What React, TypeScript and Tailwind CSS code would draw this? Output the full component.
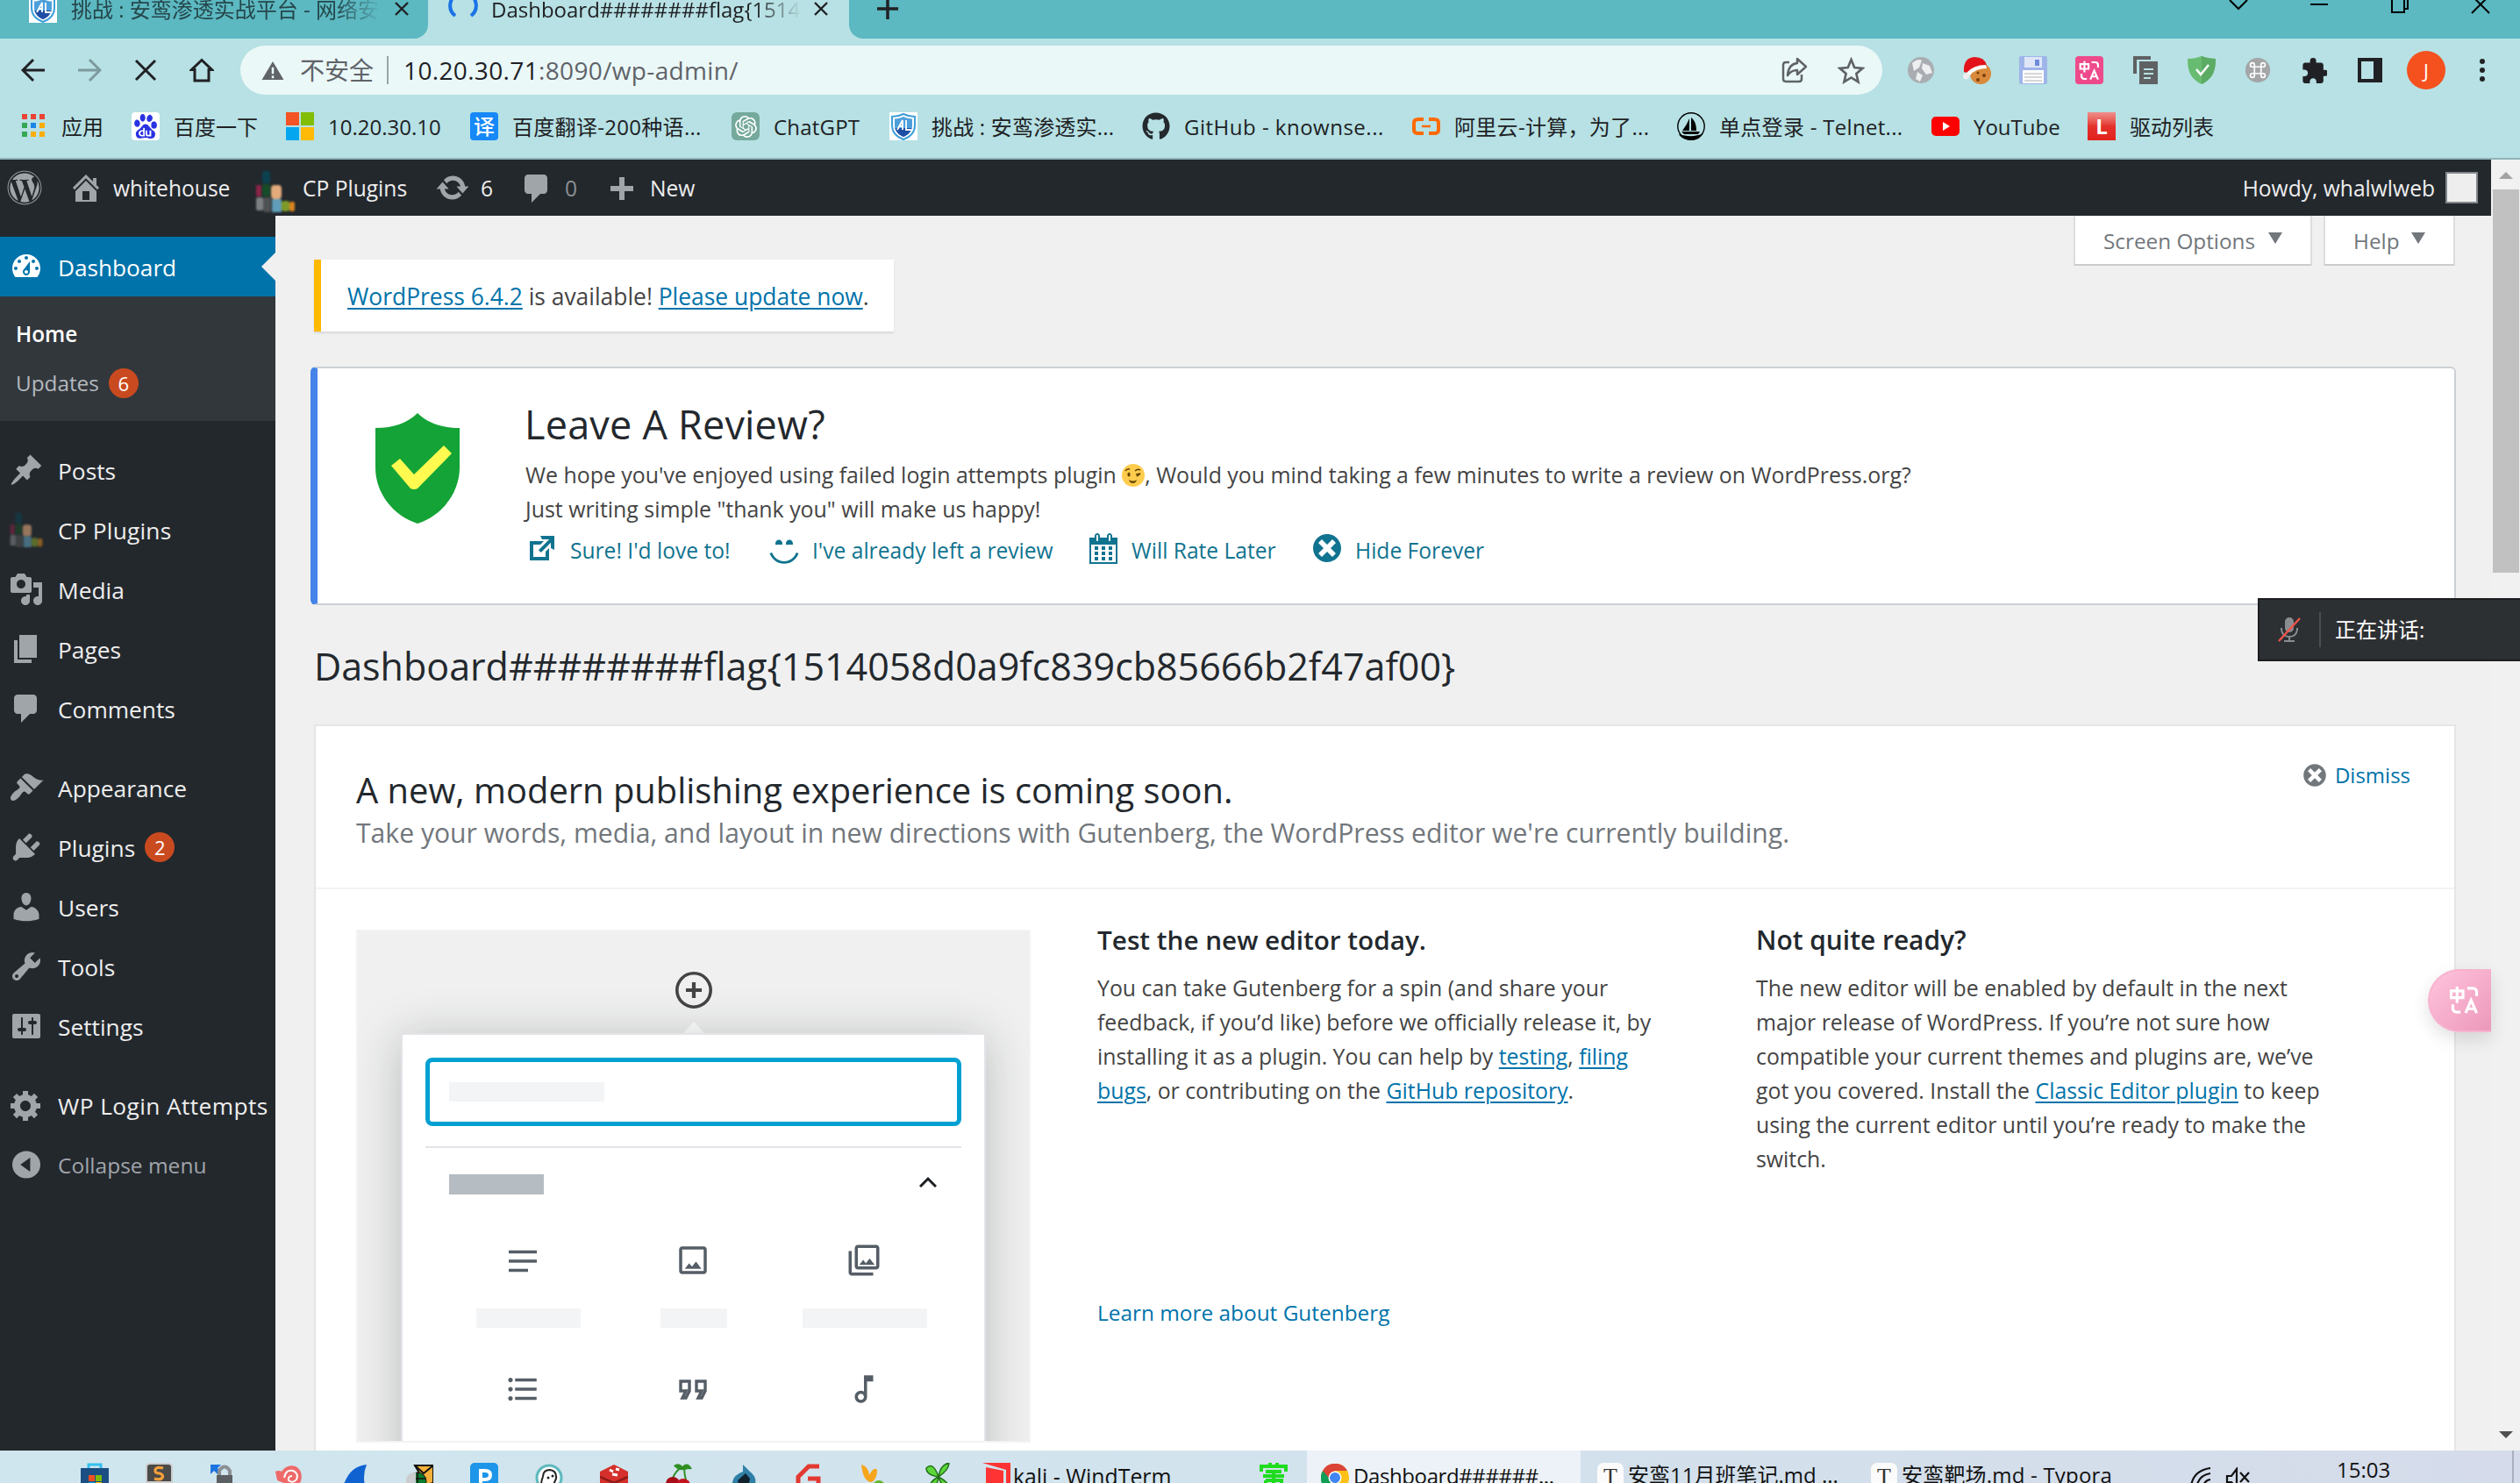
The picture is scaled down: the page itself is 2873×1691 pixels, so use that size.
import React from "react";
import { FaGithub, FaWordpress } from "react-icons/fa";
import { SiBaidu, SiOpenai } from "react-icons/si";

const dash = {
  dashboard:
    "M3.76 16h12.48c1.1-1.37 1.76-3.11 1.76-5 0-4.42-3.58-8-8-8s-8 3.58-8 8c0 1.89.66 3.63 1.76 5zM10 4c.55 0 1 .45 1 1s-.45 1-1 1-1-.45-1-1 .45-1 1-1zM6 6c.55 0 1 .45 1 1s-.45 1-1 1-1-.45-1-1 .45-1 1-1zm8 0c.55 0 1 .45 1 1s-.45 1-1 1-1-.45-1-1 .45-1 1-1zm-5.37 5.55L12 7v6c0 1.1-.9 2-2 2s-2-.9-2-2c0-.57.24-1.08.63-1.45zM4 10c.55 0 1 .45 1 1s-.45 1-1 1-1-.45-1-1 .45-1 1-1zm12 0c.55 0 1 .45 1 1s-.45 1-1 1-1-.45-1-1 .45-1 1-1zm-5 3c0-.55-.45-1-1-1s-1 .45-1 1 .45 1 1 1 1-.45 1-1z",
  post: "M10.44 3.02l1.82-1.82 6.36 6.35-1.83 1.82c-1.05-.68-2.48-.57-3.41.36l-.75.75c-.92.93-1.04 2.35-.35 3.41l-1.83 1.82-2.41-2.41-2.8 2.79c-.42.42-3.38 2.71-3.8 2.29s1.86-3.39 2.28-3.81l2.79-2.79L4.1 9.36l1.83-1.82c1.05.69 2.48.57 3.4-.36l.75-.75c.93-.92 1.05-2.35.36-3.41z",
  comment: "M5 2h9c1.1 0 2 .9 2 2v7c0 1.1-.9 2-2 2h-2l-5 5v-5H5c-1.1 0-2-.9-2-2V4c0-1.1.9-2 2-2z",
  media:
    "M13 11V4c0-.55-.45-1-1-1h-1.67L9 1H5L3.67 3H2c-.55 0-1 .45-1 1v7c0 .55.45 1 1 1h10c.55 0 1-.45 1-1zM7 4.5c1.38 0 2.5 1.12 2.5 2.5S8.38 9.5 7 9.5 4.5 8.38 4.5 7 5.62 4.5 7 4.5zM14 6h5v10.5c0 1.38-1.12 2.5-2.5 2.5S14 17.88 14 16.5s1.12-2.5 2.5-2.5c.17 0 .34.02.5.05V9h-3V6zm-4 8.05V13h2v3.5c0 1.38-1.12 2.5-2.5 2.5S7 17.88 7 16.5 8.12 14 9.5 14c.17 0 .34.02.5.05z",
  page: "M6 15V2h10v13H6zm-1 1h8v2H3V5h2v11z",
  appearance:
    "M14.48 11.06L7.41 3.99l1.5-1.5c.5-.56 2.3-.47 3.51.32 1.21.8 1.43 1.28 2.91 2.1 1.18.64 2.45 1.26 4.45.85zm-.71.71L6.7 4.7 4.93 6.47c-.39.39-.39 1.02 0 1.41l1.06 1.06c.39.39.39 1.03 0 1.42-.6.6-1.43 1.11-2.21 1.69-.35.26-.7.53-1.01.84C1.43 14.23.4 16.08 1.4 17.07c.99 1 2.84-.03 4.18-1.36.31-.31.58-.66.85-1.02.57-.78 1.08-1.61 1.69-2.21.39-.39 1.02-.39 1.41 0l1.06 1.06c.39.39 1.02.39 1.41 0z",
  plugins:
    "M13.11 4.36L9.87 7.6 8 5.73l3.24-3.24c.35-.34 1.05-.2 1.56.32.52.51.66 1.21.31 1.55zm-8 1.77l.91-1.12 9.01 9.01-1.19.84c-.71.71-2.63 1.16-3.82 1.16H6.14L4.9 17.26c-.59.59-1.54.59-2.12 0-.59-.58-.59-1.53 0-2.12l1.24-1.24v-3.88c0-1.13.4-3.19 1.09-3.89zm7.26 3.97l3.24-3.24c.34-.35 1.04-.21 1.55.31.52.51.66 1.21.31 1.55l-3.24 3.25z",
  users:
    "M10 9.25c-2.27 0-2.73-3.44-2.73-3.44C7 4.02 7.82 2 9.97 2c2.16 0 2.98 2.02 2.71 3.81 0 0-.41 3.44-2.68 3.44zm0 2.57L12.72 10c2.39 0 4.52 2.33 4.52 4.53v2.49s-3.65 1.13-7.24 1.13c-3.65 0-7.24-1.13-7.24-1.13v-2.49c0-2.25 1.94-4.48 4.47-4.48z",
  tools:
    "M16.68 9.77c-1.34 1.34-3.3 1.67-4.95.99l-5.41 6.52c-.99.99-2.59.99-3.58 0s-.99-2.59 0-3.57l6.52-5.42c-.68-1.65-.35-3.61.99-4.95 1.28-1.28 3.12-1.62 4.72-1.06l-2.89 2.89 2.82 2.82 2.86-2.87c.53 1.58.18 3.39-1.08 4.65zM3.81 16.21c.4.39 1.04.39 1.43 0 .4-.4.4-1.04 0-1.43-.39-.4-1.03-.4-1.43 0-.39.39-.39 1.03 0 1.43z",
  settings:
    "M18 16V4c0-.55-.45-1-1-1H3c-.55 0-1 .45-1 1v12c0 .55.45 1 1 1h14c.55 0 1-.45 1-1zM8 11h1c.55 0 1 .45 1 1s-.45 1-1 1H8v1.5c0 .28-.22.5-.5.5s-.5-.22-.5-.5V13H6c-.55 0-1-.45-1-1s.45-1 1-1h1V5.5c0-.28.22-.5.5-.5s.5.22.5.5V11zm5-2h-1c-.55 0-1-.45-1-1s.45-1 1-1h1V5.5c0-.28.22-.5.5-.5s.5.22.5.5V7h1c.55 0 1 .45 1 1s-.45 1-1 1h-1v5.5c0 .28-.22.5-.5.5s-.5-.22-.5-.5V9z",
  generic:
    "M18 12h-2.18c-.17.7-.44 1.35-.81 1.93l1.54 1.54-2.1 2.1-1.54-1.54c-.58.36-1.23.63-1.91.79V19H8v-2.18c-.68-.16-1.33-.43-1.91-.79l-1.54 1.54-2.12-2.12 1.54-1.54c-.36-.58-.63-1.23-.79-1.91H1V9.03h2.17c.16-.7.44-1.35.8-1.94L2.43 5.55l2.1-2.1 1.54 1.54c.58-.37 1.24-.64 1.93-.81V2h3v2.18c.68.16 1.33.43 1.91.79l1.54-1.54 2.12 2.12-1.54 1.54c.36.59.64 1.24.8 1.94H18V12zm-8.5 1.5c1.66 0 3-1.34 3-3s-1.34-3-3-3-3 1.34-3 3 1.34 3 3 3z",
  collapse: "M10 2.2a8 7.8 0 1 0 0 15.6 8 7.8 0 1 0 0-15.6zM12.2 6v8L6.6 10z",
  home: "M16 8.5l1.53 1.53-1.06 1.06L10 4.6l-6.47 6.49-1.06-1.06L10 2.5l4 4v-2h2v4zm-6-2.46l6 5.99V18H4v-5.97zM12 17v-5H8v5h4z",
  update:
    "M10.2 3.28c3.53 0 6.43 2.61 6.92 6h2.08l-3.5 4-3.5-4h2.32c-.45-1.97-2.21-3.45-4.32-3.45-1.45 0-2.73.71-3.54 1.78L4.95 5.66C6.23 4.2 8.11 3.28 10.2 3.28zm-.4 13.44c-3.52 0-6.43-2.61-6.92-6H.8l3.5-4c1.17 1.33 2.33 2.67 3.5 4H5.48c.45 1.97 2.21 3.45 4.32 3.45 1.45 0 2.73-.71 3.54-1.78l1.71 1.95c-1.28 1.46-3.15 2.38-5.25 2.38z",
  plus: "M17 9v3h-5v5H9v-5H4V9h5V4h3v5h5z",
  dismiss:
    "M10 2c4.42 0 8 3.58 8 8s-3.58 8-8 8-8-3.58-8-8 3.58-8 8-8zm5 11l-3-3 3-3-2-2-3 3-3-3-2 2 3 3-3 3 2 2 3-3 3 3z",
  external: "M9 3h8v8l-2-1V6.92l-5.6 5.59-1.41-1.41L14.08 5H10zm3 12v-3l2-2v7H3V6h8L9 8H5v7h7z",
  smiley:
    "M7 5.2c1.1 0 2 .89 2 2 0 .37-.11.71-.28 1C8.72 8.2 8 8 7 8s-1.72.2-1.72.2c-.17-.29-.28-.63-.28-1 0-1.11.9-2 2-2zm6 0c1.11 0 2 .89 2 2 0 .37-.11.71-.28 1 0 0-.72-.2-1.72-.2s-1.72.2-1.72.2c-.17-.29-.28-.63-.28-1 0-1.11.89-2 2-2zm-3 13.7c3.72 0 7.03-2.36 8.23-5.88l-1.32-.46C15.9 15.52 13.12 17.5 10 17.5s-5.9-1.98-6.91-4.94l-1.32.46c1.2 3.52 4.51 5.88 8.23 5.88z",
  calendar:
    "M15 4h3v15H2V4h3V3c0-.41.15-.76.44-1.06.29-.29.65-.44 1.06-.44s.77.15 1.06.44c.29.3.44.65.44 1.06v1h4V3c0-.41.15-.76.44-1.06.29-.29.65-.44 1.06-.44s.77.15 1.06.44c.29.3.44.65.44 1.06v1zM6 3v2.5c0 .14.05.26.15.36.09.09.21.14.35.14s.26-.05.35-.14c.1-.1.15-.22.15-.36V3c0-.14-.05-.26-.15-.35-.09-.1-.21-.15-.35-.15s-.26.05-.35.15c-.1.09-.15.21-.15.35zm7 0v2.5c0 .14.05.26.14.36.1.09.22.14.36.14s.26-.05.36-.14c.09-.1.14-.22.14-.36V3c0-.14-.05-.26-.14-.35-.1-.1-.22-.15-.36-.15s-.26.05-.36.15c-.09.09-.14.21-.14.35zm4 15V8H3v10h14zM7 9v2H5V9h2zm2 0h2v2H9V9zm4 2V9h2v2h-2zm-6 1v2H5v-2h2zm2 0h2v2H9v-2zm4 2v-2h2v2h-2zm-6 1v2H5v-2h2zm4 2H9v-2h2v2zm4 0h-2v-2h2v2z",
};

function Dash({ name, className = "" }: { name: keyof typeof dash; className?: string }) {
  return (
    <svg viewBox="0 0 20 20" fill="currentColor" fillRule="evenodd" className={"block shrink-0 " + className}>
      <path d={dash[name]} />
    </svg>
  );
}

function CpLogo({ className = "" }: { className?: string }) {
  return (
    <svg viewBox="0 0 44 48" className={"block shrink-0 blur-[0.8px] " + className}>
      <rect x="7" y="1" width="9" height="14" rx="2" fill="#0c4250" />
      <rect x="0" y="17" width="6" height="13" rx="1" fill="#8a2446" />
      <rect x="7" y="16" width="9" height="14" rx="2" fill="#174c29" />
      <rect x="17" y="17" width="12" height="16" rx="4" fill="#e3ab7c" />
      <rect x="0" y="31" width="8" height="15" rx="2" fill="#7d8082" />
      <rect x="8" y="31" width="9" height="17" rx="2" fill="#4f5254" />
      <rect x="18" y="33" width="11" height="15" rx="1" fill="#5f9db8" />
      <rect x="29" y="35" width="9" height="12" rx="3" fill="#7f9a28" />
      <rect x="38" y="36" width="6" height="11" rx="2" fill="#d88420" />
    </svg>
  );
}

/* ---------- favicons ---------- */

function AlLogo() {
  return (
    <svg viewBox="0 0 32 32" className="block h-8 w-8 shrink-0">
      <rect width="32" height="32" fill="#fff" />
      <path d="M16 2c4 2 8 3 13 3v10c0 8-5 13-13 16C8 28 3 23 3 15V5c5 0 9-1 13-3z" fill="#fff" stroke="#3f9fd8" strokeWidth="2" />
      <path d="M16 5c3 1.500 6 2.500 10 2.500V15c0 6-4 10-10 13C10 25 6 21 6 15V7.500C10 7.500 13 6.500 16 5z" fill="#4d9fdc" />
      <path d="M6.500 18h19c-1 4.500-4.500 8-9.500 10-5-2-8.500-5.500-9.500-10z" fill="#1f4fa5" />
      <path d="M9 20l6-11v11M12 16h4M19 9v11h6" fill="none" stroke="#fff" strokeWidth="1.800" />
    </svg>
  );
}
const AppsIcon = () => (
  <svg viewBox="0 0 32 32" className="block h-8 w-8 shrink-0">
    {["#ea4335", "#ea4335", "#ea4335", "#34a853", "#1a86e8", "#fbac08", "#34a853", "#fbac08", "#fbac08"].map((c, i) => (
      <rect key={i} x={3 + (i % 3) * 10} y={2 + Math.floor(i / 3) * 10} width="6" height="6" fill={c} />
    ))}
  </svg>
);
const BaiduIcon = () => (
  <span className="flex h-8 w-8 shrink-0 items-center justify-center rounded bg-white text-[28px] text-[#2932e1]">
    <SiBaidu />
  </span>
);
const MsIcon = () => (
  <svg viewBox="0 0 32 32" className="block h-8 w-8 shrink-0">
    <path d="M0 0h15v15H0z" fill="#f35325" />
    <path d="M17 0h15v15H17z" fill="#81bc06" />
    <path d="M0 17h15v15H0z" fill="#05a6f0" />
    <path d="M17 17h15v15H17z" fill="#ffba08" />
  </svg>
);
const YiIcon = () => (
  <span className="flex h-8 w-8 shrink-0 items-center justify-center rounded bg-[#1688f8] text-[24px] leading-8 font-medium text-white">译</span>
);
const GptIcon = () => (
  <span className="flex h-8 w-8 shrink-0 items-center justify-center rounded-md bg-[#75a99c] text-[25px] text-white">
    <SiOpenai />
  </span>
);
const GithubIcon = () => <FaGithub className="block h-8 w-8 shrink-0 text-[#24292e]" />;
const AliIcon = () => (
  <svg viewBox="0 0 32 32" className="block h-8 w-8 shrink-0" fill="none" stroke="#ff6a00" strokeWidth="4">
    <path d="M13 8H7Q2 8 2 12v8q0 4 5 4h6M19 8h6q5 0 5 4v8q0 4-5 4h-6" />
    <path d="M11 16h10" strokeWidth="2.500" />
  </svg>
);
const BoatIcon = () => (
  <svg viewBox="0 0 32 32" className="block h-8 w-8 shrink-0">
    <circle cx="16" cy="16" r="15.200" fill="none" stroke="#000" strokeWidth="1.400" />
    <path d="M16 6c4 3 6 8 6 15h-6zM14 7v14H6c3-4 6-9 8-14zM5 22h21l-2 3H8zM2 25c9 3 20 3 28-1-3 5-8 8-14 8S4 29 2 25z" />
  </svg>
);
const YtIcon = () => (
  <svg viewBox="0 0 32 32" className="block h-8 w-8 shrink-0">
    <rect y="5" width="32" height="22" rx="5" fill="#f00" />
    <path d="M13 11l8 5-8 5z" fill="#fff" />
  </svg>
);
const LIcon = () => (
  <span className="flex h-8 w-8 shrink-0 items-center justify-center bg-linear-to-b from-[#ee8d8b] via-[#e4302c] to-[#e2211c] text-[24px] leading-8 font-bold text-white">
    L
  </span>
);

const bookmarks: { w: string; label: string; icon: React.ReactNode; t: string }[] = [
  { w: "w-[128px]", label: "应用", icon: <AppsIcon />, t: "" },
  { w: "w-[176px]", label: "百度一下", icon: <BaiduIcon />, t: "" },
  { w: "w-[210px]", label: "10.20.30.10", icon: <MsIcon />, t: "" },
  { w: "w-[298px]", label: "百度翻译-200种语...", icon: <YiIcon />, t: "tracking-[0.3px]" },
  { w: "w-[180px]", label: "ChatGPT", icon: <GptIcon />, t: "tracking-[0.2px]" },
  { w: "w-[288px]", label: "挑战 : 安鸾渗透实...", icon: <AlLogo />, t: "tracking-[0.2px]" },
  { w: "w-[308px]", label: "GitHub - knownse...", icon: <GithubIcon />, t: "tracking-[0.5px]" },
  { w: "w-[302px]", label: "阿里云-计算，为了...", icon: <AliIcon />, t: "tracking-[0.3px]" },
  { w: "w-[290px]", label: "单点登录 - Telnet...", icon: <BoatIcon />, t: "tracking-[0.3px]" },
  { w: "w-[178px]", label: "YouTube", icon: <YtIcon />, t: "" },
  { w: "w-[150px]", label: "驱动列表", icon: <LIcon />, t: "" },
];

/* ---------- browser chrome ---------- */

const Cross = ({ className = "" }: { className?: string }) => (
  <svg viewBox="0 0 16 16" fill="none" stroke="#202124" strokeWidth="2.400" className={"block shrink-0 " + className}>
    <path d="M1 1l14 14M15 1L1 15" />
  </svg>
);

function TabStrip() {
  return (
    <div className="flex h-[44px] shrink-0 overflow-hidden text-[24px] leading-[32px] text-[#202124]">
      <div className="flex h-[44px] w-[488px] shrink-0 items-start rounded-br-[16px] bg-[#5cb8c1]">
        <div className="-mt-[6px] ml-[33px]">
          <AlLogo />
        </div>
        <div className="-mt-[5px] ml-[16px] w-[353px] overflow-hidden whitespace-nowrap text-[#24464a] [mask-image:linear-gradient(to_right,#000_85%,transparent)]">
          挑战 : 安鸾渗透实战平台 - 网络安全
        </div>
        <Cross className="mt-[2px] ml-[16px] h-4 w-4" />
      </div>
      <div className="flex h-[44px] w-[480px] shrink-0 items-start">
        <svg viewBox="0 0 34 34" className="-mt-[11px] ml-[23px] block h-[34px] w-[34px]" fill="none" stroke="#1a73e8" strokeWidth="4">
          <path d="M10 4.500A14.500 14.500 0 0 0 8 29M24 4.500A14.500 14.500 0 0 1 26 29" />
        </svg>
        <div className="-mt-[5px] ml-[15px] w-[353px] overflow-hidden whitespace-nowrap [mask-image:linear-gradient(to_right,#000_85%,transparent)]">
          Dashboard########flag{"{"}1514058
        </div>
        <Cross className="mt-[2px] ml-[15px] h-4 w-4" />
      </div>
      <div className="flex h-[44px] grow items-start rounded-bl-[16px] bg-[#5cb8c1]">
        <svg viewBox="0 0 24 24" className="-mt-[2px] ml-[32px] block h-6 w-6" stroke="#202124" strokeWidth="3.500">
          <path d="M12 0v24M0 12h24" />
        </svg>
        <div className="ml-auto flex pr-0 text-black">
          <svg viewBox="0 0 92 22" className="h-[22px] w-[92px]" fill="none" stroke="#000" strokeWidth="2">
            <path d="M37 0l10 10 10-10" />
          </svg>
          <svg viewBox="0 0 92 22" className="h-[22px] w-[92px]" fill="none" stroke="#000" strokeWidth="2">
            <path d="M37 5h20" />
          </svg>
          <svg viewBox="0 0 92 22" className="h-[22px] w-[92px]" fill="none" stroke="#000" strokeWidth="2">
            <path d="M38-1h14v15H38zM56 0v10h-4" />
          </svg>
          <svg viewBox="0 0 92 22" className="h-[22px] w-[92px]" fill="none" stroke="#000" strokeWidth="2">
            <path d="M37-5l20 20M57-5L37 15" />
          </svg>
        </div>
      </div>
    </div>
  );
}

const Cell = ({ children }: { children: React.ReactNode }) => (
  <div className="flex h-full w-[64px] shrink-0 items-center justify-center">{children}</div>
);

function TranslateGlyph({ className = "" }: { className?: string }) {
  return (
    <svg viewBox="0 0 36 34" fill="none" stroke="currentColor" strokeWidth="3.200" className={"block " + className}>
      <path d="M2 6h14v8H2zM9 1v19M21 3h6q5 0 5 5v4M4 22v4q0 5 5 5h4" />
      <path d="M19 32l6.500-15L32 32M21 27h10" />
    </svg>
  );
}

function Toolbar() {
  return (
    <div className="flex h-[72px] shrink-0 items-center">
      <div className="flex items-center gap-[36px] pl-[24px]">
        <svg viewBox="0 0 28 28" className="h-7 w-7" fill="none" stroke="#202124" strokeWidth="3">
          <path d="M27 14H3M14 2L2 14l12 12" />
        </svg>
        <svg viewBox="0 0 28 28" className="h-7 w-7" fill="none" stroke="#7c9a9d" strokeWidth="3">
          <path d="M1 14h24M14 2l12 12-12 12" />
        </svg>
        <svg viewBox="0 0 28 28" className="h-7 w-7" fill="none" stroke="#202124" strokeWidth="3">
          <path d="M3 3l22 22M25 3L3 25" />
        </svg>
        <svg viewBox="0 0 28 28" className="h-7 w-7" fill="none" stroke="#202124" strokeWidth="3">
          <path d="M14 2.500L2.500 13.500H6V26h16V13.500h3.500z" />
        </svg>
      </div>
      <div className="ml-[30px] flex h-[56px] w-[1872px] shrink-0 items-center rounded-full bg-[#ebf8f8] text-[28px] leading-[40px] text-[#5f6368]">
        <svg viewBox="0 0 26 24" className="ml-[24px] h-[23px] w-[26px]">
          <path d="M13 1l13 22H0z" fill="#5f6368" />
          <path d="M13 8v8M13 18v3" stroke="#ebf8f8" strokeWidth="2.600" />
        </svg>
        <span className="ml-[18px]">不安全</span>
        <div className="ml-[15px] h-8 w-[2px] bg-[#9aa5a7]" />
        <span className="ml-[17px] text-[28px] tracking-[0.35px]">
          <span className="text-[#202124]">10.20.30.71</span>:8090/wp-admin/
        </span>
        <svg viewBox="0 0 30 30" className="mr-[34px] ml-auto h-[30px] w-[30px]" fill="none" stroke="#5f6368" strokeWidth="2.500">
          <path d="M9 6H5Q2 6 2 9v16q0 3 3 3h15q3 0 3-3v-5" />
          <path d="M18 2l10 9-10 9v-5q-7 0-11 6 1-13 11-14z" strokeLinejoin="round" />
        </svg>
        <svg viewBox="0 0 30 30" className="mr-[20px] h-[31px] w-[31px]" fill="none" stroke="#5f6368" strokeWidth="2.600">
          <path d="M15 3l3.600 8.600 9 .8-6.900 6 2.100 9.100L15 22.700l-7.800 4.800 2.100-9.100-6.900-6 9-.8z" />
        </svg>
      </div>
      <div className="ml-[12px] flex h-full">
        <Cell>
          <svg viewBox="0 0 32 32" className="h-8 w-8">
            <circle cx="16" cy="16" r="15" fill="#a9adb1" />
            <path d="M6 8q7-6 11-3l-3 8-6 4zM18 8l8 3 3 8-7 2-5-7zM12 18l6 4-3 7-5-3z" fill="#eceef0" />
          </svg>
        </Cell>
        <Cell>
          <svg viewBox="0 0 32 32" className="h-8 w-8">
            <circle cx="20" cy="20" r="12" fill="#d98a3a" />
            <circle cx="24" cy="22" r="2" fill="#7b3f10" />
            <circle cx="17" cy="27" r="2" fill="#7b3f10" />
            <circle cx="17" cy="19" r="1.500" fill="#7b3f10" />
            <path d="M1 18Q0 2 13 1q12 0 14 10L5 19z" fill="#e3121a" />
            <path d="M4 19q8-9 22-9l1 4Q14 14 8 22z" fill="#fff" />
            <circle cx="3.500" cy="23" r="3.500" fill="#eee" />
          </svg>
        </Cell>
        <Cell>
          <svg viewBox="0 0 32 32" className="h-8 w-8">
            <rect width="32" height="32" rx="2" fill="#9fb5ea" />
            <rect x="6" y="1" width="20" height="12" fill="#dfe6f8" />
            <rect x="18" y="4" width="5" height="7" fill="#6d8bd8" />
            <rect x="4" y="16" width="24" height="15" fill="#fff" />
            <path d="M6 20h20M6 24h20M6 28h20" stroke="#c9c9c9" strokeWidth="1.500" />
          </svg>
        </Cell>
        <Cell>
          <div className="flex h-8 w-8 items-center justify-center rounded bg-[#ee4a8b] text-white">
            <TranslateGlyph className="h-[23px] w-[25px]" />
          </div>
        </Cell>
        <Cell>
          <svg viewBox="0 0 32 32" className="h-8 w-8" fill="#5f6163">
            <path d="M2 0h20v4H6v16H2z" />
            <path d="M9 6h21v26H9z" />
            <path d="M14 15h11M14 20h11M14 25h8" stroke="#b7e1e4" strokeWidth="2" />
          </svg>
        </Cell>
        <Cell>
          <svg viewBox="0 0 32 32" className="h-8 w-8">
            <path d="M16 0c5 2 10 3 16 3 0 15-4 23-16 29C4 26 0 18 0 3c6 0 11-1 16-3z" fill="#68bc71" />
            <path d="M16 0c5 2 10 3 16 3 0 15-4 23-16 29z" fill="#5bab64" />
            <path d="M10 15l5 6 9-11" fill="none" stroke="#fff" strokeWidth="2.600" />
          </svg>
        </Cell>
        <Cell>
          <svg viewBox="0 0 32 32" className="h-[30px] w-[30px]">
            <circle cx="16" cy="16" r="15" fill="#a3a5a6" />
            <path
              d="M12 12h8v8h-8zM12 12H9.500A2.500 2.500 0 1 1 12 9.500zM20 12V9.500a2.500 2.500 0 1 1 2.500 2.500zM20 20h2.500a2.500 2.500 0 1 1-2.500 2.500zM12 20v2.500A2.500 2.500 0 1 1 9.500 20z"
              fill="none"
              stroke="#fff"
              strokeWidth="1.800"
            />
          </svg>
        </Cell>
        <Cell>
          <svg viewBox="1 1 21 21" className="h-[29px] w-[29px]" fill="#202124">
            <path d="M20.500 11H19V7c0-1.100-.9-2-2-2h-4V3.500a2.500 2.500 0 0 0-5 0V5H4c-1.100 0-1.990.9-1.990 2v3.800H3.500c1.490 0 2.700 1.210 2.700 2.700s-1.210 2.700-2.700 2.700H2V20c0 1.100.9 2 2 2h3.800v-1.500c0-1.490 1.210-2.700 2.700-2.700s2.700 1.210 2.700 2.700V22H17c1.100 0 2-.9 2-2v-4h1.500a2.500 2.500 0 0 0 0-5z" />
          </svg>
        </Cell>
        <Cell>
          <svg viewBox="0 0 28 28" className="h-7 w-7">
            <path d="M0 0h28v28H0zM4 4v20h14V4z" fill="#202124" fillRule="evenodd" />
          </svg>
        </Cell>
        <Cell>
          <div className="flex h-[44px] w-[44px] items-center justify-center rounded-full bg-[#f4511e] text-[22px] leading-none text-white">J</div>
        </Cell>
        <Cell>
          <div className="flex flex-col gap-[4px]">
            <div className="h-[6px] w-[6px] rounded-full bg-[#202124]" />
            <div className="h-[6px] w-[6px] rounded-full bg-[#202124]" />
            <div className="h-[6px] w-[6px] rounded-full bg-[#202124]" />
          </div>
        </Cell>
      </div>
    </div>
  );
}

function Bookmarks() {
  return (
    <div className="flex h-[66px] shrink-0 items-center border-b-2 border-[#8fb4b8] pb-[8px] pl-[22px] text-[24px] leading-[32px] whitespace-nowrap text-[#202124]">
      {bookmarks.map((b) => (
        <div key={b.label} className={"flex shrink-0 items-center gap-[16px] " + b.w}>
          {b.icon}
          <span className={"mt-[2px] " + b.t}>{b.label}</span>
        </div>
      ))}
    </div>
  );
}

/* ---------- WordPress ---------- */

function AdminBar() {
  return (
    <div className="flex h-[64px] shrink-0 items-center bg-[#23282d] text-[24.600px] leading-[62px] whitespace-nowrap text-[#eee]">
      <FaWordpress className="ml-[8px] h-[40px] w-[40px] shrink-0 text-[#a0a5aa]" />
      <div className="ml-[30px] flex w-[214px] shrink-0 items-center">
        <Dash name="home" className="h-10 w-10 text-[#a0a5aa]" />
        <span className="mt-[2px] ml-[11px]">whitehouse</span>
      </div>
      <CpLogo className="mt-[7px] h-[48px] w-[44px]" />
      <span className="mt-[2px] ml-[9px] w-[151px]">CP Plugins</span>
      <Dash name="update" className="h-10 w-10 text-[#a0a5aa]" />
      <span className="mt-[2px] ml-[12px] w-[44px]">6</span>
      <Dash name="comment" className="mt-[2px] h-10 w-10 text-[#a0a5aa]" />
      <span className="mt-[2px] ml-[12px] w-[44px] text-[#8b9095]">0</span>
      <Dash name="plus" className="h-10 w-10 text-[#a0a5aa]" />
      <span className="mt-[2px] ml-[13px]">New</span>
      <span className="mt-[2px] ml-auto">Howdy, whalwlweb</span>
      <div className="mr-[15px] ml-[12px] h-[36px] w-[37px] border-2 border-[#82878c] bg-[#eee]" />
    </div>
  );
}

function MenuItem({ icon, label, badge, track = "" }: { icon: React.ReactNode; label: string; badge?: string; track?: string }) {
  return (
    <div className="flex h-[68px] shrink-0 items-center text-[26.300px] leading-[66px] whitespace-nowrap text-[#eee]">
      <div className="ml-[10px] w-[56px] text-[#a0a5aa]">{icon}</div>
      <span className={"mt-[2px] " + track}>{label}</span>
      {badge && <Badge n={badge} />}
    </div>
  );
}
const Badge = ({ n }: { n: string }) => (
  <span className="ml-[11px] flex h-[34px] w-[34px] items-center justify-center rounded-full bg-[#ca4a1f] text-[22px] leading-none text-white">{n}</span>
);

function Sidebar() {
  const ic = "h-10 w-10";
  return (
    <div className="flex w-[314px] shrink-0 flex-col bg-[#23282d] pt-[24px]">
      <div className="flex h-[68px] shrink-0 items-center bg-[#0073aa] text-[26.200px] leading-[66px] text-white">
        <Dash name="dashboard" className="ml-[10px] h-10 w-10" />
        <span className="mt-[2px] ml-[16px]">Dashboard</span>
        <div className="ml-auto h-0 w-0 border-y-[16px] border-r-[16px] border-y-transparent border-r-[#f0f0f0]" />
      </div>
      <div className="flex h-[142px] shrink-0 flex-col bg-[#32373c] pt-[15px] pl-[18px] text-[24.300px] leading-[56px]">
        <span className="font-semibold text-white">Home</span>
        <div className="flex items-center text-[#b4b9be]">
          Updates
          <Badge n="6" />
        </div>
      </div>
      <div className="mt-[22px] flex flex-col">
        <MenuItem icon={<Dash name="post" className={ic} />} label="Posts" />
        <MenuItem icon={<CpLogo className="h-[40px] w-[40px] opacity-60" />} label="CP Plugins" track="tracking-[0.2px]" />
        <MenuItem icon={<Dash name="media" className={ic} />} label="Media" />
        <MenuItem icon={<Dash name="page" className={ic} />} label="Pages" />
        <MenuItem icon={<Dash name="comment" className={ic} />} label="Comments" />
      </div>
      <div className="mt-[22px] flex flex-col">
        <MenuItem icon={<Dash name="appearance" className={ic} />} label="Appearance" />
        <MenuItem icon={<Dash name="plugins" className={ic} />} label="Plugins" badge="2" />
        <MenuItem icon={<Dash name="users" className={ic} />} label="Users" />
        <MenuItem icon={<Dash name="tools" className={ic} />} label="Tools" />
        <MenuItem icon={<Dash name="settings" className={ic} />} label="Settings" />
      </div>
      <div className="mt-[22px] flex flex-col">
        <MenuItem icon={<Dash name="generic" className={ic} />} label="WP Login Attempts" track="tracking-[0.4px]" />
      </div>
      <div className="flex h-[68px] items-center text-[24.500px] leading-[66px] text-[#a0a5aa]">
        <Dash name="collapse" className="ml-[10px] h-10 w-10" />
        <span className="mt-[2px] ml-[16px]">Collapse menu</span>
      </div>
    </div>
  );
}

const ScreenTab = ({ label, className }: { label: string; className: string }) => (
  <div className={"flex h-[57px] items-center justify-between border-2 border-t-0 border-[#ddd] border-b-[#ccc] bg-white pr-[32px] pl-[32px] text-[24.300px] leading-[53px] text-[#72777c] " + className}>
    <span className="mt-[2px]">{label}</span>
    <div className="mb-[4px] h-0 w-0 border-x-[8px] border-t-[13px] border-x-transparent border-t-[#72777c]" />
  </div>
);

const A = ({ children }: { children: React.ReactNode }) => (
  <span className="text-[#0073aa] underline decoration-2 underline-offset-[3px]">{children}</span>
);

function ReviewBox() {
  return (
    <div className="mt-[40px] -ml-[4px] flex h-[272px] w-[2446px] shrink-0 rounded-[6px] border-2 border-l-[8px] border-[#ccd0d4] border-l-[#4583e8] bg-white whitespace-nowrap">
      <svg viewBox="0 0 96 126" className="mt-[51px] ml-[66px] h-[126px] w-[96px] shrink-0">
        <path d="M48 0c11 11 27 17 48 17v45c0 29-20 55-48 64C20 117 0 91 0 62V17c21 0 37-6 48-17z" fill="#14a336" />
        <path d="M18 60l10-8 16 18 34-33 9 9-39 40q-4 2-8 0z" fill="#fffa50" />
      </svg>
      <div className="ml-[74px] flex flex-col pt-[33px]">
        <div className="text-[45px] leading-[62px] tracking-[0.2px] text-[#23282d]">Leave A Review?</div>
        <div className="mt-[7px] ml-[1px] text-[24.900px] leading-[39px] text-[#444]">
          We hope you've enjoyed using failed login attempts plugin{" "}
          <svg viewBox="0 0 26 26" className="inline-block h-[26px] w-[26px] align-[-4px]">
            <circle cx="13" cy="13" r="13" fill="#ffcc4d" />
            <path d="M4 8q2-3 5-2M15 8q3-3 6-1M16 12l5-1-4 3" fill="none" stroke="#664500" strokeWidth="1.600" />
            <ellipse cx="8" cy="12" rx="1.600" ry="2.500" fill="#664500" />
            <path d="M8 18q5 3 9 0-1 4-4.500 4T8 18z" fill="#664500" />
          </svg>
          , Would you mind taking a few minutes to write a review on WordPress.org?
          <br />
          Just writing simple "thank you" will make us happy!
        </div>
        <div className="mt-[4px] flex h-[48px] items-center text-[24.600px] leading-[48px] text-[#10738f]">
          <Dash name="external" className="mb-[6px] h-10 w-10" />
          <span className="ml-[12px] w-[224px]">Sure! I'd love to!</span>
          <Dash name="smiley" className="mb-[6px] h-10 w-10" />
          <span className="ml-[12px] w-[312px]">I've already left a review</span>
          <Dash name="calendar" className="mb-[6px] h-10 w-10" />
          <span className="ml-[12px] w-[203px]">Will Rate Later</span>
          <Dash name="dismiss" className="mb-[6px] h-10 w-10" />
          <span className="ml-[12px]">Hide Forever</span>
        </div>
      </div>
    </div>
  );
}

function Bar({ className }: { className: string }) {
  return <div className={"h-[22px] bg-[#f3f4f5] " + className} />;
}

function GutenbergArt() {
  return (
    <div className="flex h-[585px] w-[769px] shrink-0 flex-col items-center overflow-hidden border-2 border-[#f3f3f3] bg-[#f0f0f0]">
      <svg viewBox="0 0 42 42" className="mt-[46px] h-[42px] w-[42px] shrink-0" fill="none" stroke="#444" strokeWidth="3.600">
        <circle cx="21" cy="21" r="19.200" />
        <path d="M21 12v18M12 21h18" strokeWidth="4.200" />
      </svg>
      <div className="mt-[15px] h-0 w-0 shrink-0 border-x-[12px] border-b-[13px] border-x-transparent border-b-white" />
      <div className="flex h-[600px] w-[667px] shrink-0 flex-col border-2 border-[#e2e4e7] bg-white px-[26px] pt-[26px] shadow-[0_6px_50px_rgba(25,30,35,0.25)]">
        <div className="flex h-[78px] shrink-0 items-center rounded-[8px] border-[5px] border-[#00a0d2] pl-[22px]">
          <Bar className="w-[177px]" />
        </div>
        <div className="mt-[23px] h-[2px] shrink-0 bg-[#e2e4e7]" />
        <div className="mt-[30px] flex items-start justify-between pr-[28px] pl-[27px]">
          <div className="h-[23px] w-[108px] bg-[#b5bcc2]" />
          <svg viewBox="0 0 20 13" className="mt-[2px] h-[13px] w-[20px]" fill="none" stroke="#191e23" strokeWidth="3">
            <path d="M1 12l9-9 9 9" />
          </svg>
        </div>
        <div className="mt-[54px] grid w-[612px] grid-cols-[221px_168px_221px] justify-items-center text-[#555d66]">
          <svg viewBox="0 0 42 42" className="h-[42px] w-[42px]" fill="none" stroke="currentColor" strokeWidth="3.600">
            <path d="M5 11.500h32M5 22h32M5 32.500h22" />
          </svg>
          <svg viewBox="0 0 24 24" className="h-[42px] w-[42px]" fill="currentColor">
            <path d="M19 3H5c-1.100 0-2 .9-2 2v14c0 1.100.9 2 2 2h14c1.100 0 2-.9 2-2V5c0-1.100-.9-2-2-2zm0 16H5V5h14v14zM9.500 14l-2.800 3.500h10.800L14 12.800l-2.600 3.400z" />
          </svg>
          <svg viewBox="0 0 24 24" className="h-[42px] w-[42px]" fill="currentColor">
            <path d="M20 4v12H8V4h12m0-2H8c-1.100 0-2 .9-2 2v12c0 1.100.9 2 2 2h12c1.100 0 2-.9 2-2V4c0-1.100-.9-2-2-2zm-8.500 9.670l1.690 2.260 2.480-3.100L19 15H9zM2 6v14c0 1.100.9 2 2 2h14v-2H4V6H2z" />
          </svg>
          <Bar className="mt-[34px] ml-[13px] w-[119px]" />
          <Bar className="mt-[34px] ml-[2px] w-[76px]" />
          <Bar className="mt-[34px] ml-[2px] w-[142px]" />
          <svg viewBox="0 0 24 24" className="mt-[49px] h-[42px] w-[42px]" fill="currentColor">
            <path d="M4 10.500c-.83 0-1.500.67-1.500 1.500s.67 1.500 1.500 1.500 1.500-.67 1.500-1.500-.67-1.500-1.500-1.500zm0-6c-.83 0-1.500.67-1.500 1.500S3.170 7.500 4 7.500 5.500 6.830 5.500 6 4.830 4.500 4 4.500zm0 12c-.83 0-1.500.68-1.500 1.500s.68 1.500 1.500 1.500 1.500-.68 1.500-1.500-.67-1.500-1.500-1.500zM7 19h14v-2H7v2zm0-6h14v-2H7v2zm0-8v2h14V5H7z" />
          </svg>
          <svg viewBox="0 0 42 42" className="mt-[49px] h-[42px] w-[42px]" fill="none" stroke="currentColor" strokeWidth="3.400">
            <path d="M7 12h10v11l-4 8H9l4-8H7zM25 12h10v11l-4 8h-4l4-8h-6z" />
          </svg>
          <svg viewBox="0 0 24 24" className="mt-[49px] h-[42px] w-[42px]" fill="currentColor">
            <path d="M12 3l.01 10.550c-.59-.34-1.270-.55-2-.55C7.790 13 6 14.790 6 17s1.790 4 4.010 4S14 19.210 14 17V7h4V3h-6zm-1.990 16c-1.100 0-2-.9-2-2s.9-2 2-2 2 .9 2 2-.9 2-2 2z" />
          </svg>
        </div>
      </div>
    </div>
  );
}

function WelcomePanel() {
  return (
    <div className="mt-[36px] flex w-[2442px] grow flex-col border-2 border-b-0 border-[#e5e5e5] bg-white whitespace-nowrap">
      <div className="flex h-[186px] shrink-0 justify-between border-b-2 border-[#f3f3f3] pt-[44px] pl-[46px]">
        <div>
          <div className="text-[39.900px] leading-[57px] text-[#23282d]">A new, modern publishing experience is coming soon.</div>
          <div className="text-[30.130px] leading-[42px] text-[#72777c]">
            Take your words, media, and layout in new directions with Gutenberg, the WordPress editor we're currently building.
          </div>
        </div>
        <div className="-mt-[2px] flex h-[28px] items-center pr-[50px] text-[24px] leading-[28px] text-[#0073aa]">
          <Dash name="dismiss" className="mr-[7px] h-[32px] w-[32px] text-[#72777c]" />
          Dismiss
        </div>
      </div>
      <div className="flex text-[24.850px] leading-[39px] text-[#444]">
        <div className="mt-[46px] ml-[46px]">
          <GutenbergArt />
        </div>
        <div className="ml-[76px] w-[751px] pt-[35px]">
          <div className="text-[29.700px] leading-[46px] font-semibold text-[#23282d]">Test the new editor today.</div>
          <div className="mt-[12px]">
            You can take Gutenberg for a spin (and share your
            <br />
            feedback, if you’d like) before we officially release it, by
            <br />
            installing it as a plugin. You can help by <A>testing</A>, <A>filing</A>
            <br />
            <A>bugs</A>, or contributing on the <A>GitHub repository</A>.
          </div>
          <div className="mt-[214px] text-[24.400px] text-[#0073aa]">Learn more about Gutenberg</div>
        </div>
        <div className="pt-[35px]">
          <div className="text-[29.900px] leading-[46px] font-semibold text-[#23282d]">Not quite ready?</div>
          <div className="mt-[12px]">
            The new editor will be enabled by default in the next
            <br />
            major release of WordPress. If you’re not sure how
            <br />
            compatible your current themes and plugins are, we’ve
            <br />
            got you covered. Install the <A>Classic Editor plugin</A> to keep
            <br />
            using the current editor until you’re ready to make the
            <br />
            switch.
          </div>
        </div>
      </div>
    </div>
  );
}

function Main() {
  return (
    <div className="flex h-full w-[2526px] shrink-0 flex-col overflow-hidden bg-[#f0f0f0] pl-[44px]">
      <div className="flex h-[132px] shrink-0 items-start">
        <div className="mt-[50px] flex h-[82px] w-[661px] items-center border-l-[8px] border-[#ffb900] bg-white pl-[30px] text-[26.400px] leading-[80px] whitespace-nowrap text-[#444] shadow-[0_2px_2px_rgba(0,0,0,0.1)]">
          <span className="mt-[2px]">
            <A>WordPress 6.4.2</A> is available! <A>Please update now</A>.
          </span>
        </div>
        <div className="mr-[41px] ml-auto flex gap-[13px]">
          <ScreenTab label="Screen Options" className="w-[272px]" />
          <ScreenTab label="Help" className="w-[150px]" />
        </div>
      </div>
      <ReviewBox />
      <div className="mt-[40px] text-[43px] leading-[60px] whitespace-nowrap text-[#23282d]">
        Dashboard########flag{"{"}1514058d0a9fc839cb85666b2f47af00{"}"}
      </div>
      <WelcomePanel />
    </div>
  );
}

/* ---------- desktop taskbar ---------- */

const TIcon = () => (
  <div className="mt-[2px] flex h-[32px] w-[30px] shrink-0 items-center justify-center rounded-[7px] bg-[#fbfbfb] font-['Liberation_Serif',serif] text-[26px] leading-none text-[#333]">T</div>
);

const trayIcons: React.ReactNode[] = [
  <>
    <path d="M9 8V2h14v6" fill="none" stroke="#35c0ee" strokeWidth="3" />
    <path d="M0 6h32v28H0z" fill="#1b4e83" />
    <path d="M9 14h7v7H9z" fill="#f25022" />
    <path d="M17 14h7v7h-7z" fill="#7fba00" />
    <path d="M9 22h7v7H9z" fill="#00a4ef" />
    <path d="M17 22h7v7h-7z" fill="#ffb900" />
  </>,
  <>
    <rect x="1" y="1" width="29" height="31" rx="4" fill="#4a4a48" stroke="#ccc" strokeWidth="2" />
    <path d="M20 6q-8-2-9 2t5 4q5 2 3 5t-9 1" fill="none" stroke="#f7a03c" strokeWidth="3.200" />
    <path d="M2 22h28" stroke="#ccc" strokeWidth="2" />
  </>,
  <>
    <path d="M0 2h12l-4 4 4 5-4 2-4-4-4 4z" fill="#1d74e0" />
    <path d="M10 14V9q6-9 12 0v5" fill="none" stroke="#8b8f94" strokeWidth="4" />
    <path d="M7 14h18v18H7z" fill="#5b5f63" />
    <path d="M20 22l10 4v6H20z" fill="#27b22f" />
  </>,
  <>
    <path d="M0 10q4-2 7 0 6-9 16-6 9 5 6 17l-7 11H10l2-8-10-4z" fill="#ee6a6a" />
    <path d="M10 17q2-10 10-8 7 3 4 10-4 5-9 1-1-5 4-5" fill="none" stroke="#fff" strokeWidth="2" />
  </>,
  <path d="M2 32Q8 4 30 2q-6 14 0 30z" fill="#0f62d0" />,
  <>
    <path d="M11 3h21v20l-8 2z" fill="#f5b13a" stroke="#111" strokeWidth="2" />
    <path d="M11 3l10 9 11-9" fill="none" stroke="#111" strokeWidth="2" />
    <circle cx="14" cy="21" r="10" fill="#0a7d2c" stroke="#111" />
    <path d="M14 11v20M5 18h18M5 24h18" stroke="#111" strokeWidth="1.500" />
    <path d="M12 11q-12 0-11 12 4 8 11 8z" fill="#c9cdcf" />
  </>,
  <>
    <rect width="32" height="36" rx="5" fill="#1d95e8" />
    <path d="M12 28V9h5q6 0 6 5t-6 5h-5" fill="none" stroke="#fff" strokeWidth="4" />
  </>,
  <>
    <circle cx="16" cy="17" r="14" fill="#fff" stroke="#5cb9bd" strokeWidth="3" />
    <path d="M9 16q0-8 8-8 8 1 7 10l-4 9M9 16q-3 6-1 12" fill="none" stroke="#222" strokeWidth="2" />
    <circle cx="15" cy="17" r="1.500" fill="#222" />
    <circle cx="20" cy="15" r="1.500" fill="#222" />
    <path d="M15 23h6l-2 4z" fill="#222" />
  </>,
  <>
    <path d="M0 10l16-8 16 8v24H0z" fill="#d5302b" />
    <path d="M0 16l16 7 16-7M0 24l16 7 16-7" fill="none" stroke="#8f1b17" strokeWidth="2.500" />
    <path d="M11 8l4 2M18 7l4 1M14 13l6 1" stroke="#fff" strokeWidth="3" />
  </>,
  <>
    <path d="M20 5Q12 8 8 20M22 4q0 8 2 16" fill="none" stroke="#2f8f22" strokeWidth="2" />
    <path d="M10 3q6-4 10 1 6-6 11 3-6 0-9 1-8 1-12-5z" fill="#2f8f22" />
    <circle cx="9" cy="24" r="8" fill="#a80d18" />
    <circle cx="21" cy="26" r="8" fill="#c31420" />
  </>,
  <>
    <path d="M15 2l8 8q8 6 6 14-3 9-13 9Q4 33 3 22q1-8 12-12z" fill="#2f7fa6" />
    <path d="M9 20l9-8 5 6-3 14h-8z" fill="#12212e" />
  </>,
  <path d="M28 4H16L4 16v18h18l5-5V18H15" fill="none" stroke="#e23a32" strokeWidth="5" />,
  <>
    <path d="M2 2q8 2 9 12Q16 4 20 8q0 10-6 14-10 0-12-20z" fill="#f7a51c" />
    <circle cx="22" cy="27" r="7" fill="#67b62e" />
  </>,
  <path d="M16 16Q10-2 2 6q0 8 14 10Q28 8 28 0 18 2 16 16q8 4 14 12-10 2-14-12Q6 20 4 32q10-2 12-16z" fill="#5cd63a" stroke="#22701a" strokeWidth="1.500" />,
];

function Taskbar() {
  return (
    <div className="flex h-[37px] shrink-0 items-start overflow-hidden bg-linear-to-r from-[#cfe6ee] via-[#d2e3ed] to-[#d5dbea] text-[24px] leading-[32px] whitespace-nowrap text-[#111]">
      <div className="ml-[71px] flex pt-[14px]">
        {trayIcons.map((n, i) => (
          <div key={i} className="flex w-[74px] justify-center">
            <svg viewBox="0 0 32 32" className="h-8 w-8">
              {n}
            </svg>
          </div>
        ))}
      </div>
      <div className="ml-[13px] flex w-[316px] gap-[3px] pt-[13px]">
        <svg viewBox="0 0 32 32" className="mt-[1px] h-8 w-8 shrink-0">
          <path d="M0 0h32v32h-5V8z" fill="#f33" />
          <path d="M4 5l20 4v23H4z" fill="#f33" />
        </svg>
        <span className="text-[24.800px]">kali - WindTerm</span>
      </div>
      <div className="w-[54px] pt-[14px]">
        <svg viewBox="0 0 32 32" className="h-8 w-8" fill="none" stroke="#1fdc1f" strokeWidth="4">
          <path d="M2 10V4h28v6M12 0v4M20 0v4M7 10h18M4 15h24M7 20h18v13M7 20v13M7 26h18M16 10v22" />
        </svg>
      </div>
      <div className="flex h-[37px] w-[312px] gap-[5px] bg-[#ecf2f7] pt-[13px] pl-[16px]">
        <svg viewBox="0 0 32 32" className="mt-[2px] h-8 w-8 shrink-0">
          <circle cx="16" cy="16" r="16" fill="#fbc116" />
          <path d="M2 8a16 16 0 0 0 12 24l7-12-5-4z" fill="#0f9d58" />
          <path d="M2 8L9 16l7-8h14a16 16 0 0 0-28 0z" fill="#db4437" />
          <circle cx="16" cy="16" r="7.500" fill="#fff" />
          <circle cx="16" cy="16" r="6" fill="#4285f4" />
        </svg>
        <span className="tracking-[-0.4px]">Dashboard######...</span>
      </div>
      <div className="ml-[19px] flex w-[312px] gap-[5px] pt-[12px]">
        <TIcon />
        <span>安鸾11月班笔记.md ...</span>
      </div>
      <div className="flex w-[363px] gap-[5px] pt-[12px]">
        <TIcon />
        <span className="tracking-[0.2px]">安鸾靶场.md - Typora</span>
      </div>
      <svg viewBox="0 0 74 32" className="mt-[19px] h-8 w-[74px]" fill="none" stroke="#111" strokeWidth="2.200">
        <path d="M2 22Q4 4 24 1M8 24Q10 9 24 7M15 26Q16 15 24 14" />
        <path d="M43 10h5l6-8v22l-6-7h-5zM58 6l10 11M68 6L58 17" />
      </svg>
      <span className="mt-[6px] ml-[94px]">15:03</span>
      <div className="mr-[7px] ml-auto h-[37px] w-[2px] bg-[#a9b0c0]" />
    </div>
  );
}

export default function App() {
  return (
    <div className="relative flex h-[1691px] w-[2873px] flex-col overflow-hidden bg-[#b7e1e4] font-['Open_Sans','Noto_Sans_CJK_SC',sans-serif]">
      <TabStrip />
      <Toolbar />
      <Bookmarks />
      <div className="flex h-[1472px] shrink-0">
        <div className="flex w-[2840px] shrink-0 flex-col">
          <AdminBar />
          <div className="flex h-[1408px]">
            <Sidebar />
            <Main />
          </div>
        </div>
        <div className="flex grow flex-col items-center bg-[#f1f1f1] pt-[14px] pb-[14px]">
          <div className="h-0 w-0 border-x-[8px] border-b-[8px] border-x-transparent border-b-[#a3a3a3]" />
          <div className="mt-[12px] h-[437px] w-[30px] bg-[#c1c1c1]" />
          <div className="mt-auto h-0 w-0 border-x-[8px] border-t-[8px] border-x-transparent border-t-[#505050]" />
        </div>
      </div>
      <Taskbar />

      <div className="absolute top-[682px] left-[2574px] flex h-[72px] w-[299px] items-center border-2 border-r-0 border-[#1b1d20] bg-[#2d3033]">
        <svg viewBox="0 0 26 30" className="ml-[21px] h-[30px] w-[26px]" fill="none">
          <rect x="8" y="1" width="10" height="17" rx="5" fill="#8a8d90" />
          <path d="M4 13v2q1 8 9 8t9-8v-2M13 23v5M7 28h12" stroke="#8a8d90" strokeWidth="2" />
          <path d="M1 28L25 2" stroke="#f0524a" strokeWidth="2.400" />
        </svg>
        <div className="ml-[21px] h-[40px] w-[2px] bg-[#4b4e51]" />
        <span className="ml-[16px] text-[24px] leading-[32px] text-white">正在讲话:</span>
      </div>

      <div className="absolute top-[1105px] left-[2768px] h-[72px] w-[72px] rounded-l-full border-2 border-r-0 border-[#f7b3cf] bg-linear-to-br from-[#ffc4dd] to-[#ec98bb] shadow-[0_8px_20px_rgba(0,0,0,0.12)]">
        <TranslateGlyph className="mt-[17px] ml-[22px] h-[33px] w-[36px] text-white" />
      </div>
    </div>
  );
}
